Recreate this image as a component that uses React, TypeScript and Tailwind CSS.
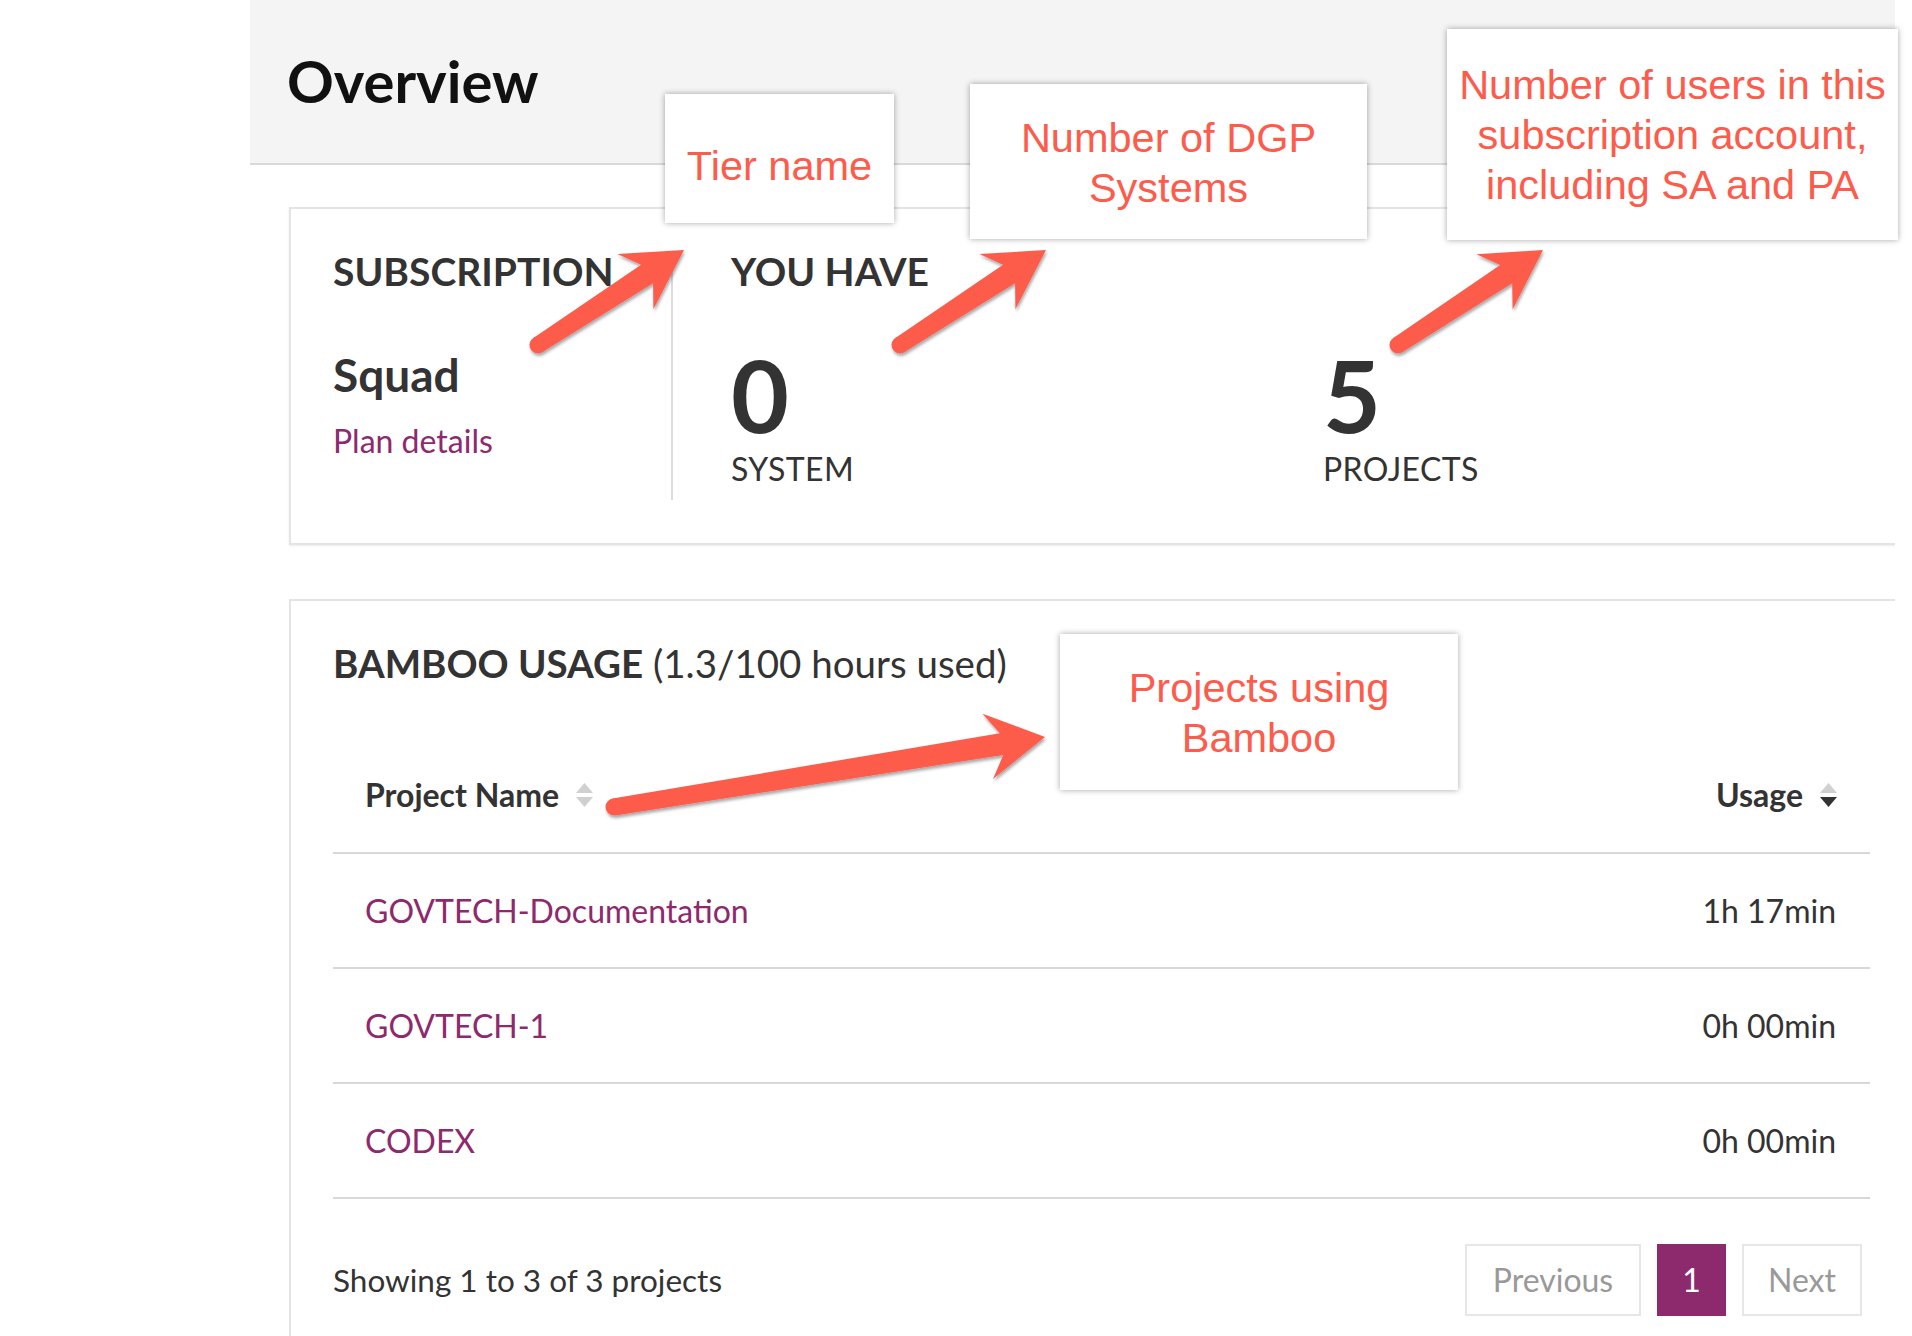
import React from "react";

type Pt = [number, number];

// skitch-style arrow: shaft with round tail, swept-back head
const arrowPoints = (tail: Pt, tip: Pt) => {
  const dx = tip[0] - tail[0];
  const dy = tip[1] - tail[1];
  const len = Math.hypot(dx, dy);
  const ux = dx / len;
  const uy = dy / len;
  const nx = -uy;
  const ny = ux;
  const head = 58;
  const barb = 33;
  const neckBack = 44;
  const tailHalf = 8.5;
  const neckHalf = 11;
  const base = [tip[0] - ux * head, tip[1] - uy * head];
  const neck = [tip[0] - ux * neckBack, tip[1] - uy * neckBack];
  const p = (x: number, y: number) => `${x.toFixed(1)},${y.toFixed(1)}`;
  return [
    p(tail[0] + nx * tailHalf, tail[1] + ny * tailHalf),
    p(neck[0] + nx * neckHalf, neck[1] + ny * neckHalf),
    p(base[0] + nx * barb, base[1] + ny * barb),
    p(tip[0], tip[1]),
    p(base[0] - nx * barb, base[1] - ny * barb),
    p(neck[0] - nx * neckHalf, neck[1] - ny * neckHalf),
    p(tail[0] - nx * tailHalf, tail[1] - ny * tailHalf),
  ].join(" ");
};

const arrows: { tail: Pt; tip: Pt }[] = [
  { tail: [538, 345], tip: [684, 250] },
  { tail: [900, 345], tip: [1046, 250] },
  { tail: [1398, 345], tip: [1543, 250] },
  { tail: [614, 807], tip: [1045, 737] },
];

const Callout = ({
  className,
  lines,
}: {
  className: string;
  lines: string[];
}) => (
  <div
    className={`absolute bg-white text-center font-['Liberation_Sans',Arial,sans-serif] text-[41.5px] leading-[50px] text-[#fd5b4b] shadow-[0_0_6px_rgba(0,0,0,0.35)] ${className}`}
  >
    {lines.map((l) => (
      <div key={l}>{l}</div>
    ))}
  </div>
);

const SortIcon = ({ down = "#d0d0d0" }: { down?: string }) => (
  <svg width="19" height="26" viewBox="0 0 19 26">
    <path d="M9.5 1 L18 11 L1 11 Z" fill="#d0d0d0" />
    <path d="M1 15 L18 15 L9.5 25 Z" fill={down} />
  </svg>
);

const rows = [
  { name: "GOVTECH-Documentation", usage: "1h 17min" },
  { name: "GOVTECH-1", usage: "0h 00min" },
  { name: "CODEX", usage: "0h 00min" },
];

const App = () => {
  return (
    <div className="relative h-[1336px] w-full overflow-hidden bg-white font-['Lato',sans-serif] text-[#333]">
      <div className="ml-[250px] w-[1645px] overflow-hidden">
        <header className="h-[165px] border-b-2 border-[#d9d9d9] bg-[#f4f4f4] pl-[37px] pt-[52px]">
          <h1 className="text-[58px] font-bold leading-none text-[#111]">Overview</h1>
        </header>

        <div className="pl-[39px]">
          {/* subscription card */}
          <section className="mt-[42px] w-[1625px] border-2 border-[#e4e4e4] pb-[43px] pl-[42px] pt-[43px] shadow-[0_1px_2px_rgba(0,0,0,0.08)]">
            <div className="flex">
              <div className="w-[340px] border-r-2 border-[#dcdcdc] pb-[43px]">
                <h2 className="text-[39px] font-bold leading-none">SUBSCRIPTION</h2>
                <div className="mt-[61px] text-[46px] font-bold leading-none">Squad</div>
                <a className="mt-[27px] block text-[32px] leading-none text-[#8d2a6d]">
                  Plan details
                </a>
              </div>
              <div className="pl-[58px]">
                <h2 className="text-[39px] font-bold leading-none">YOU HAVE</h2>
                <div className="mt-[53px] flex">
                  <div className="w-[592px]">
                    <div className="text-[100px] font-bold leading-none">0</div>
                    <div className="mt-[9px] text-[32px] leading-none tracking-[0.4px]">SYSTEM</div>
                  </div>
                  <div className="w-[400px]">
                    <div className="text-[100px] font-bold leading-none">5</div>
                    <div className="mt-[9px] text-[32px] leading-none tracking-[0.4px]">PROJECTS</div>
                  </div>
                </div>
              </div>
            </div>
          </section>

          {/* bamboo usage card */}
          <section className="mt-[54px] w-[1625px] border-2 border-[#e4e4e4] pb-[60px] pl-[42px] pr-[42px] pt-[43px]">
            <h2 className="text-[38.5px] leading-none">
              <span className="font-bold">BAMBOO USAGE</span> (1.3/100 hours used)
            </h2>
            <div className="flex h-[171.5px] items-end justify-between border-b-2 border-[#d8d8d8] pb-[42px] pl-[32px] pr-[32px]">
              <div className="flex items-center gap-[16px] text-[32px] font-bold leading-[30px]">
                Project Name
                <SortIcon />
              </div>
              <div className="flex items-center gap-[16px] text-[32px] font-bold leading-[30px]">
                Usage
                <SortIcon down="#333333" />
              </div>
            </div>
            {rows.map((r) => (
              <div
                key={r.name}
                className="flex h-[115px] items-center justify-between border-b-2 border-[#d8d8d8] pl-[32px] pr-[34px] text-[32px] leading-[30px]"
              >
                <a className="text-[#8d2a6d]">{r.name}</a>
                <span>{r.usage}</span>
              </div>
            ))}
            <div className="mt-[45px] flex items-center justify-between pr-[8px]">
              <span className="text-[31.5px] leading-[30px]">Showing 1 to 3 of 3 projects</span>
              <div className="flex gap-4 text-[32px] leading-[30px]">
                <button className="flex h-[72px] w-[176px] items-center justify-center border-2 border-[#e6e6e6] text-[#999]">
                  Previous
                </button>
                <button className="flex h-[72px] w-[69px] items-center justify-center bg-[#8d2a6d] text-white">
                  1
                </button>
                <button className="flex h-[72px] w-[120px] items-center justify-center border-2 border-[#e6e6e6] text-[#999]">
                  Next
                </button>
              </div>
            </div>
          </section>
        </div>
      </div>

      {/* annotation overlay */}
      <svg
        className="pointer-events-none absolute left-0 top-0"
        width="1912"
        height="1336"
        viewBox="0 0 1912 1336"
      >
        <defs>
          <filter id="arrowShadow" x="-20%" y="-20%" width="140%" height="140%">
            <feDropShadow dx="1" dy="2.5" stdDeviation="1.6" floodColor="#000" floodOpacity="0.35" />
          </filter>
        </defs>
        {arrows.map((a, i) => (
          <g key={i} fill="#fd5b4b" filter="url(#arrowShadow)">
            <polygon points={arrowPoints(a.tail, a.tip)} />
            <circle cx={a.tail[0]} cy={a.tail[1]} r="8.5" />
          </g>
        ))}
      </svg>

      <Callout className="left-[665px] top-[94px] h-[129px] w-[229px] pt-[47px]" lines={["Tier name"]} />
      <Callout
        className="left-[970px] top-[84px] h-[155px] w-[397px] pt-[29px]"
        lines={["Number of DGP", "Systems"]}
      />
      <Callout
        className="left-[1447px] top-[29px] h-[211px] w-[451px] pt-[31px]"
        lines={["Number of users in this", "subscription account,", "including SA and PA"]}
      />
      <Callout
        className="left-[1060px] top-[634px] h-[156px] w-[398px] pt-[29px]"
        lines={["Projects using", "Bamboo"]}
      />
    </div>
  );
};

export default App;
